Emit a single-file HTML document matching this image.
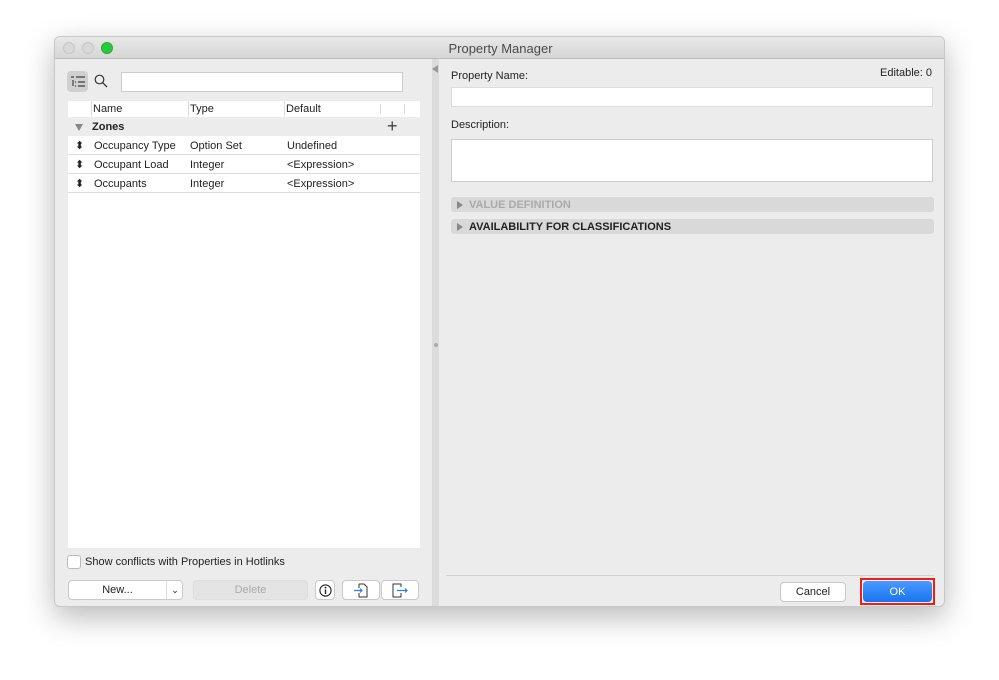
<!DOCTYPE html>
<html><head><meta charset="utf-8"><style>
*{box-sizing:border-box;margin:0;padding:0}
body{width:999px;height:680px;background:#fff;font-family:"Liberation Sans",sans-serif;font-size:11px;color:#222;position:relative;overflow:hidden}
.a{position:absolute}
.win{left:54px;top:36px;width:891px;height:571px;background:#ececec;border:1px solid #c8c8c8;border-radius:6px;box-shadow:0 10px 30px rgba(0,0,0,.28);overflow:hidden}
.tb{left:0;top:0;width:891px;height:22px;background:linear-gradient(#e8e8e8,#d6d6d6);border-bottom:1px solid #bcbcbc;text-align:center;font-size:13px;line-height:24px;color:#4a4a4a}
.dot{width:12px;height:12px;border-radius:50%;top:5px}
.in{background:#fff;border:1px solid #ccc}
.row{left:13px;width:352px;height:19px;background:#fff;border-bottom:1px solid #ddd;line-height:20px}
.row span{position:absolute}
.btn{background:#fff;border:1px solid #c9c9c9;border-radius:4px;text-align:center;line-height:18px;font-size:11px}
.sec{left:396px;width:483px;height:15px;background:#d9d9d9;border-radius:3px;font-weight:bold;font-size:11px;line-height:17px;padding-left:18px}
.sec:before{content:"";position:absolute;left:6px;top:4px;border-left:6px solid #888;border-top:4px solid transparent;border-bottom:4px solid transparent}
</style></head><body>
<div class="a win">
 <div class="a tb">Property Manager</div>
 <div class="a dot" style="left:8px;background:#d8d8d8;border:1px solid #c6c6c6"></div>
 <div class="a dot" style="left:27px;background:#d8d8d8;border:1px solid #c6c6c6"></div>
 <div class="a dot" style="left:46px;background:#2ac840;border:1px solid #20b035"></div>
 <div class="a" style="left:12px;top:34px;width:21px;height:21px;background:#d0d0d0;border-radius:4px"></div>
 <svg class="a" style="left:15px;top:38px" width="16" height="14" viewBox="0 0 16 14"><g stroke="#555" stroke-width="1.4" fill="none"><path d="M1 2h3M6 2h9M3 5v6M5 7h1M8 7h7M5 11h1M8 11h7"/></g></svg>
 <svg class="a" style="left:39px;top:37px" width="14" height="14" viewBox="0 0 14 14"><circle cx="5.5" cy="5.5" r="4.3" stroke="#333" stroke-width="1.2" fill="none"/><path d="M8.7 8.7L13 13" stroke="#333" stroke-width="1.3"/></svg>
 <div class="a in" style="left:66px;top:35px;width:282px;height:20px"></div>
 <div class="a" style="left:13px;top:64px;width:352px;height:447px;background:#fff"></div>
 <div class="a" style="left:13px;top:64px;width:352px;height:16px;background:#fff;line-height:16px">
  <span class="a" style="left:23px;border-left:1px solid #ddd;padding-left:1px">Name</span>
  <span class="a" style="left:120px;border-left:1px solid #ddd;padding-left:1px">Type</span>
  <span class="a" style="left:216px;border-left:1px solid #ddd;padding-left:1px">Default</span>
  <span class="a" style="left:312px;top:3px;height:10px;border-left:1px solid #ddd"></span>
  <span class="a" style="left:336px;top:3px;height:10px;border-left:1px solid #ddd"></span>
 </div>
 <div class="a" style="left:13px;top:80px;width:352px;height:19px;background:#ececec;line-height:21px;font-weight:bold">
  <span class="a" style="left:7px;top:7px;border-top:7px solid #888;border-left:4px solid transparent;border-right:4px solid transparent"></span>
  <span class="a" style="left:24px">Zones</span>
  <span class="a" style="left:319px;font-weight:normal;font-size:18px;color:#444;line-height:19px">+</span>
 </div>
 <div class="a row" style="top:99px"><span style="left:7px">⬍</span><span style="left:26px">Occupancy Type</span><span style="left:122px">Option Set</span><span style="left:219px">Undefined</span></div>
 <div class="a row" style="top:118px"><span style="left:7px">⬍</span><span style="left:26px">Occupant Load</span><span style="left:122px">Integer</span><span style="left:219px">&lt;Expression&gt;</span></div>
 <div class="a row" style="top:137px"><span style="left:7px">⬍</span><span style="left:26px">Occupants</span><span style="left:122px">Integer</span><span style="left:219px">&lt;Expression&gt;</span></div>
 <div class="a" style="left:12px;top:518px;width:14px;height:14px;background:#fff;border:1px solid #bbb;border-radius:3px"></div>
 <div class="a" style="left:30px;top:519px">Show conflicts with Properties in Hotlinks</div>
 <div class="a btn" style="left:13px;top:543px;width:115px;height:20px"><span class="a" style="left:0;width:97px;line-height:18px">New...</span><span class="a" style="left:97px;top:0;height:18px;border-left:1px solid #ddd;width:17px;font-size:9px">&#8964;</span></div>
 <div class="a btn" style="left:138px;top:543px;width:115px;height:20px;background:#e4e4e4;color:#aaa;border-color:#ddd">Delete</div>
 <div class="a btn" style="left:260px;top:543px;width:20px;height:20px"><svg style="margin-top:3px" width="13" height="13" viewBox="0 0 13 13"><circle cx="6.5" cy="6.5" r="5.6" fill="none" stroke="#222" stroke-width="1.1"/><path d="M6.5 5.5v4.5" stroke="#222" stroke-width="1.4"/><circle cx="6.5" cy="3.6" r=".9" fill="#222"/></svg></div>
 <div class="a btn" style="left:287px;top:543px;width:38px;height:20px"><svg style="margin-top:2px" width="16" height="15" viewBox="0 0 16 15"><path d="M6 1h5l3 3v10H6V10M6 5V1" stroke="#333" fill="none"/><path d="M1 7.5h8M7 5.5l2 2-2 2" stroke="#2a7fe8" fill="none" stroke-width="1.2"/></svg></div>
 <div class="a btn" style="left:326px;top:543px;width:38px;height:20px"><svg style="margin-top:2px" width="18" height="15" viewBox="0 0 18 15"><path d="M10 4V1H2v13h8v-4" stroke="#333" fill="none"/><path d="M6 7.5h10M14 5.5l2 2-2 2" stroke="#2a7fe8" fill="none" stroke-width="1.2"/></svg></div>
 <div class="a" style="left:377px;top:22px;width:7px;height:549px;background:#dcdcdc"></div>
 <div class="a" style="left:377px;top:28px;border-right:6px solid #999;border-top:4px solid transparent;border-bottom:4px solid transparent"></div>
 <div class="a" style="left:379px;top:306px;width:4px;height:4px;border-radius:50%;background:#aaa"></div>
 <div class="a" style="left:396px;top:33px">Property Name:</div>
 <div class="a" style="right:12px;top:30px">Editable: 0</div>
 <div class="a in" style="left:396px;top:50px;width:482px;height:20px;border-color:#ddd"></div>
 <div class="a" style="left:396px;top:82px">Description:</div>
 <div class="a in" style="left:396px;top:102px;width:482px;height:43px"></div>
 <div class="a sec" style="top:160px;color:#aaa">VALUE DEFINITION</div>
 <div class="a sec" style="top:182px">AVAILABILITY FOR CLASSIFICATIONS</div>
 <div class="a" style="left:391px;top:538px;width:488px;border-top:1px solid #d2d2d2"></div>
 <div class="a btn" style="left:725px;top:545px;width:66px;height:20px;line-height:19px">Cancel</div>
 <div class="a" style="left:805px;top:541px;width:75px;height:27px;border:2px solid #f01e14"></div>
 <div class="a" style="left:808px;top:544px;width:69px;height:21px;background:linear-gradient(#4a9bff,#1873f0);border-radius:4px;color:#fff;text-align:center;line-height:22px;font-size:11px">OK</div>
</div>
</body></html>
